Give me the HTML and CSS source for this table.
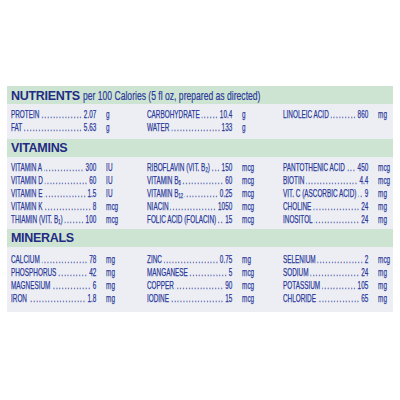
FILE: index.html
```html
<!DOCTYPE html>
<html>
<head>
<meta charset="utf-8">
<link rel="stylesheet" href="styles.css">
</head>
<body>
<div class="panel">
  <div class="band"><span class="h">NUTRIENTS</span><span class="hsub">per 100 Calories (5 fl oz, prepared as directed)</span></div>
  <div class="rows nutr">
    <div class="col">
      <div class="item"><div class="lead"><span class="lbl">PROTEIN</span><span class="dots"></span><span class="val">2.07</span></div><span class="unit">g</span></div>
      <div class="item"><div class="lead"><span class="lbl">FAT</span><span class="dots"></span><span class="val">5.63</span></div><span class="unit">g</span></div>
    </div>
    <div class="col">
      <div class="item"><div class="lead"><span class="lbl">CARBOHYDRATE</span><span class="dots"></span><span class="val">10.4</span></div><span class="unit">g</span></div>
      <div class="item"><div class="lead"><span class="lbl">WATER</span><span class="dots"></span><span class="val">133</span></div><span class="unit">g</span></div>
    </div>
    <div class="col">
      <div class="item"><div class="lead"><span class="lbl">LINOLEIC ACID</span><span class="dots"></span><span class="val">860</span></div><span class="unit">mg</span></div>
    </div>
  </div>

  <div class="band"><span class="h">VITAMINS</span></div>
  <div class="rows vit">
    <div class="col">
      <div class="item"><div class="lead"><span class="lbl">VITAMIN A</span><span class="dots"></span><span class="val">300</span></div><span class="unit">IU</span></div>
      <div class="item"><div class="lead"><span class="lbl">VITAMIN D</span><span class="dots"></span><span class="val">60</span></div><span class="unit">IU</span></div>
      <div class="item"><div class="lead"><span class="lbl">VITAMIN E</span><span class="dots"></span><span class="val">1.5</span></div><span class="unit">IU</span></div>
      <div class="item"><div class="lead"><span class="lbl">VITAMIN K</span><span class="dots"></span><span class="val">8</span></div><span class="unit">mcg</span></div>
      <div class="item"><div class="lead"><span class="lbl">THIAMIN (VIT. B<sub>1</sub>)</span><span class="dots"></span><span class="val">100</span></div><span class="unit">mcg</span></div>
    </div>
    <div class="col">
      <div class="item"><div class="lead"><span class="lbl">RIBOFLAVIN (VIT. B<sub>2</sub>)</span><span class="dots"></span><span class="val">150</span></div><span class="unit">mcg</span></div>
      <div class="item"><div class="lead"><span class="lbl">VITAMIN B<sub>6</sub></span><span class="dots"></span><span class="val">60</span></div><span class="unit">mcg</span></div>
      <div class="item"><div class="lead"><span class="lbl">VITAMIN B<sub>12</sub></span><span class="dots"></span><span class="val">0.25</span></div><span class="unit">mcg</span></div>
      <div class="item"><div class="lead"><span class="lbl">NIACIN</span><span class="dots"></span><span class="val">1050</span></div><span class="unit">mcg</span></div>
      <div class="item"><div class="lead"><span class="lbl">FOLIC ACID (FOLACIN)</span><span class="dots"></span><span class="val">15</span></div><span class="unit">mcg</span></div>
    </div>
    <div class="col">
      <div class="item"><div class="lead"><span class="lbl">PANTOTHENIC ACID</span><span class="dots"></span><span class="val">450</span></div><span class="unit">mcg</span></div>
      <div class="item"><div class="lead"><span class="lbl">BIOTIN</span><span class="dots"></span><span class="val">4.4</span></div><span class="unit">mcg</span></div>
      <div class="item"><div class="lead"><span class="lbl">VIT. C (ASCORBIC ACID)</span><span class="dots"></span><span class="val">9</span></div><span class="unit">mg</span></div>
      <div class="item"><div class="lead"><span class="lbl">CHOLINE</span><span class="dots"></span><span class="val">24</span></div><span class="unit">mg</span></div>
      <div class="item"><div class="lead"><span class="lbl">INOSITOL</span><span class="dots"></span><span class="val">24</span></div><span class="unit">mg</span></div>
    </div>
  </div>

  <div class="band"><span class="h">MINERALS</span></div>
  <div class="rows min">
    <div class="col">
      <div class="item"><div class="lead"><span class="lbl">CALCIUM</span><span class="dots"></span><span class="val">78</span></div><span class="unit">mg</span></div>
      <div class="item"><div class="lead"><span class="lbl">PHOSPHORUS</span><span class="dots"></span><span class="val">42</span></div><span class="unit">mg</span></div>
      <div class="item"><div class="lead"><span class="lbl">MAGNESIUM</span><span class="dots"></span><span class="val">6</span></div><span class="unit">mg</span></div>
      <div class="item"><div class="lead"><span class="lbl">IRON</span><span class="dots"></span><span class="val">1.8</span></div><span class="unit">mg</span></div>
    </div>
    <div class="col">
      <div class="item"><div class="lead"><span class="lbl">ZINC</span><span class="dots"></span><span class="val">0.75</span></div><span class="unit">mg</span></div>
      <div class="item"><div class="lead"><span class="lbl">MANGANESE</span><span class="dots"></span><span class="val">5</span></div><span class="unit">mcg</span></div>
      <div class="item"><div class="lead"><span class="lbl">COPPER</span><span class="dots"></span><span class="val">90</span></div><span class="unit">mcg</span></div>
      <div class="item"><div class="lead"><span class="lbl">IODINE</span><span class="dots"></span><span class="val">15</span></div><span class="unit">mcg</span></div>
    </div>
    <div class="col">
      <div class="item"><div class="lead"><span class="lbl">SELENIUM</span><span class="dots"></span><span class="val">2</span></div><span class="unit">mcg</span></div>
      <div class="item"><div class="lead"><span class="lbl">SODIUM</span><span class="dots"></span><span class="val">24</span></div><span class="unit">mg</span></div>
      <div class="item"><div class="lead"><span class="lbl">POTASSIUM</span><span class="dots"></span><span class="val">105</span></div><span class="unit">mg</span></div>
      <div class="item"><div class="lead"><span class="lbl">CHLORIDE</span><span class="dots"></span><span class="val">65</span></div><span class="unit">mg</span></div>
    </div>
  </div>
</div>
</body>
</html>
```
FILE: styles.css
```css
html, body {
  margin: 0;
  padding: 0;
  background: #ffffff;
}
body {
  width: 400px;
  height: 400px;
  overflow: hidden;
  font-family: "Liberation Sans", Arial, sans-serif;
  color: #2a389a;
}
.panel {
  margin: 86px 0 0 7px;
  width: 386px;
  background: #eceef3;
}
.band {
  background: #cee4d2;
  height: 18px;
  padding-left: 4px;
  display: flex;
  align-items: baseline;
  line-height: 19px;
  white-space: nowrap;
  overflow: hidden;
}
.h {
  font-weight: bold;
  font-size: 12.5px;
  letter-spacing: -0.3px;
  color: #1f2b84;
}
.hsub {
  display: inline-block;
  margin-left: 3px;
  font-size: 13px;
  transform: scaleX(0.66);
  transform-origin: 0 50%;
  color: #2a389a;
  -webkit-text-stroke: 0.2px #2a389a;
}
.rows {
  display: flex;
  padding-left: 4px;
}
.nutr { padding-top: 4px; padding-bottom: 5px; }
.vit { padding-top: 4px; padding-bottom: 3px; }
.min { padding-top: 6px; padding-bottom: 7px; }
.col {
  width: 136px;
  flex: 0 0 136px;
}
.item {
  display: flex;
  align-items: baseline;
  width: 234px;
  height: 13px;
  line-height: 13px;
  font-size: 11px;
  white-space: nowrap;
  transform: scaleX(0.58);
  transform-origin: 0 50%;
  -webkit-text-stroke: 0.25px #2a389a;
}
.lead {
  display: flex;
  align-items: baseline;
  width: 147px;
  flex: 0 0 147px;
}
.lbl {
  flex: 0 0 auto;
}
.lbl sub {
  font-size: 7px;
  line-height: 0;
  vertical-align: -1px;
}
.dots {
  flex: 1 1 auto;
  overflow: hidden;
  min-width: 0;
  margin: 0 2px 0 3px;
  direction: rtl;
}
.dots::after {
  content: "..................................................";
  letter-spacing: 2px;
}
.val {
  flex: 0 0 auto;
}
.unit {
  margin-left: 17px;
}
```
